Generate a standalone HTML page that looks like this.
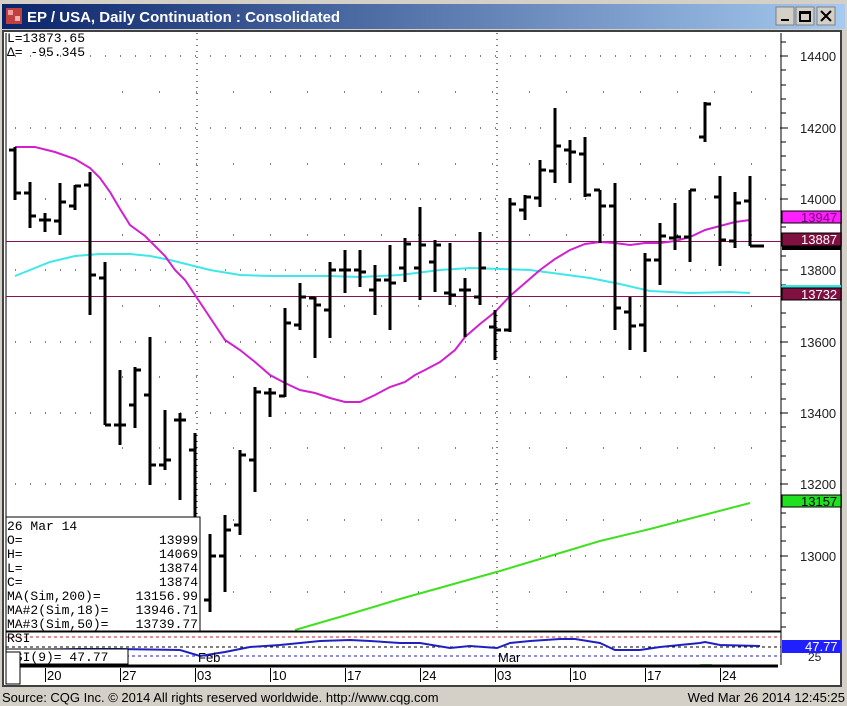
<!DOCTYPE html>
<html><head><meta charset="utf-8"><style>
html,body{margin:0;padding:0;width:847px;height:706px;overflow:hidden;background:#d4d0c8;font-family:"Liberation Sans",sans-serif}
svg{display:block}
</style></head><body>
<svg width="847" height="706" xmlns="http://www.w3.org/2000/svg" font-family="Liberation Sans, sans-serif">
<defs><linearGradient id="tb" x1="0" x2="1"><stop offset="0" stop-color="#0a246a"/><stop offset="1" stop-color="#a6caf0"/></linearGradient></defs>
<rect x="0" y="0" width="847" height="706" fill="#d4d0c8"/>
<rect x="2" y="4" width="843" height="25" fill="url(#tb)"/>
<rect x="6" y="8" width="16" height="16" fill="#c04040"/><rect x="8" y="10" width="5" height="5" fill="#f0a0a0"/><rect x="15" y="16" width="5" height="5" fill="#f0b0b0"/>
<text x="27" y="22" font-size="15" font-weight="bold" fill="#fff">EP / USA, Daily Continuation : Consolidated</text>
<g fill="#d4d0c8" stroke="#808080"><rect x="776" y="7" width="18" height="18"/><rect x="796" y="7" width="18" height="18"/><rect x="817" y="7" width="18" height="18"/></g>
<path d="M781 20h8M800 12h10v9h-10zM800 13h10M821 11l10 10M831 11l-10 10" stroke="#000" stroke-width="2" fill="none"/>
<rect x="3" y="31" width="838" height="655" fill="#fff"/>
<rect x="3" y="31" width="838" height="655" fill="none" stroke="#404040" stroke-width="2"/>
<g stroke="#000" stroke-width="1" stroke-dasharray="1,14">
<path d="M15 56H781M15 128H781M15 199H781M15 270H781M15 342H781M15 413H781M15 484H781M15 556H781"/>
</g>
<g stroke="#000" stroke-width="1" stroke-dasharray="1,5">
<path d="M197 33V630M497 33V630M781 33V665"/>
</g>
<g stroke="#000" stroke-dasharray="1,36"><path d="M122 92H781M122 164H781M122 235H781M122 306H781M122 377H781M122 448H781M122 520H781M122 592H781"/></g>
<path d="M6 33V665" stroke="#000" stroke-width="1"/>
<path d="M781 33V665" stroke="#000" stroke-width="1"/>
<g stroke="#000"><path d="M781 42h5M781 56h7M781 70h5M781 85h5M781 99h5M781 113h5M781 128h7M781 142h5M781 156h5M781 170h5M781 185h5M781 199h7M781 213h5M781 227h5M781 242h5M781 256h5M781 270h7M781 285h5M781 299h5M781 313h5M781 327h5M781 342h7M781 356h5M781 370h5M781 384h5M781 399h5M781 413h7M781 427h5M781 441h5M781 456h5M781 470h5M781 484h7M781 498h5M781 513h5M781 527h5M781 541h5M781 556h7M781 570h5M781 584h5M781 598h5M781 613h5M781 627h5"/></g>
<path d="M6 241.5H781M6 296.5H781" stroke="#8a1050" stroke-width="1"/>
<polyline fill="none" stroke="#3ee8e8" stroke-width="2" points="15,276 30,270 50,262 75,256 100,254 130,254 150,256 170,260 190,265 210,270 240,275 270,276 300,276 330,276 360,277 400,275 440,270 470,268 500,269 530,270 560,274 590,278 620,284 650,291 690,293 730,292 750,293"/>
<polyline fill="none" stroke="#d020d0" stroke-width="2" points="15,147 35,147 55,152 75,159 90,168 100,178 110,192 120,209 130,225 145,236 155,246 165,256 175,270 185,280 195,295 205,310 215,325 225,340 240,350 255,362 270,375 285,383 300,390 315,393 330,398 345,402 360,402 375,395 390,387 405,382 415,375 425,370 440,362 455,350 465,337 480,324 495,312 510,296 525,283 540,270 555,259 570,250 585,244 600,242 615,243 630,245 645,243 660,243 675,241 690,237 705,230 720,226 735,222 750,220"/>
<polyline fill="none" stroke="#40e020" stroke-width="2" points="295,630 350,614 400,599 450,585 500,571 550,556 600,541 650,529 700,516 750,503"/>
<g stroke="#000" stroke-width="3" fill="none">
<path d="M15 147V200M9 150h6M15 193h6"/>
<path d="M30 182V228M24 193h6M30 216h6"/>
<path d="M45 213V232M39 220h6M45 220h6"/>
<path d="M60 183V235M54 221h6M60 202h6"/>
<path d="M75 185V210M69 206h6M75 186h6"/>
<path d="M90 172V315M84 185h6M90 275h6"/>
<path d="M105 262V425M99 278h6M105 425h6"/>
<path d="M120 370V445M114 425h6M120 425h6"/>
<path d="M135 367V428M129 405h6M135 370h6"/>
<path d="M150 337V485M144 395h6M150 465h6"/>
<path d="M165 410V470M159 465h6M165 460h6"/>
<path d="M180 413V500M174 420h6M180 420h6"/>
<path d="M195 433V560M189 450h6"/>
<path d="M210 534V612M204 600h6M210 556h6"/>
<path d="M225 515V592M219 556h6M225 530h6"/>
<path d="M240 450V535M234 525h6M240 455h6"/>
<path d="M255 387V492M249 460h6M255 392h6"/>
<path d="M270 388V417M264 393h6M270 393h6"/>
<path d="M285 308V397M279 396h6M285 323h6"/>
<path d="M300 283V330M294 325h6M300 297h6"/>
<path d="M315 297V358M309 298h6M315 305h6"/>
<path d="M330 262V338M324 310h6M330 270h6"/>
<path d="M345 250V293M339 270h6M345 270h6"/>
<path d="M360 250V287M354 270h6M360 272h6"/>
<path d="M375 265V315M369 290h6M375 280h6"/>
<path d="M390 245V330M384 280h6M390 283h6"/>
<path d="M405 238V282M399 268h6M405 244h6"/>
<path d="M420 207V300M414 268h6M420 245h6"/>
<path d="M435 240V292M429 262h6M435 245h6"/>
<path d="M450 243V305M444 293h6M450 295h6"/>
<path d="M465 278V337M459 290h6M465 290h6"/>
<path d="M480 232V305M474 297h6M480 268h6"/>
<path d="M495 310V360M489 327h6M495 330h6"/>
<path d="M510 198V332M504 330h6M510 204h6"/>
<path d="M525 195V220M519 210h6M525 197h6"/>
<path d="M540 160V207M534 198h6M540 170h6"/>
<path d="M555 108V183M549 171h6M555 146h6"/>
<path d="M570 140V183M564 150h6M570 152h6"/>
<path d="M585 137V197M579 154h6M585 195h6"/>
<path d="M600 190V243M594 190h6M600 206h6"/>
<path d="M615 183V330M609 206h6M615 308h6"/>
<path d="M630 297V350M624 312h6M630 326h6"/>
<path d="M645 253V352M639 325h6M645 260h6"/>
<path d="M660 223V285M654 260h6M660 236h6"/>
<path d="M675 203V250M669 238h6M675 237h6"/>
<path d="M690 190V262M684 237h6M690 190h6"/>
<path d="M705 102V142M699 137h6M705 104h6"/>
<path d="M720 176V266M714 197h6M720 240h6"/>
<path d="M735 192V248M729 241h6M735 203h6"/>
<path d="M750 176V246M744 201h6M750 246h14"/>
</g>
<text font-family="Liberation Mono, monospace" font-size="13" fill="#000"><tspan x="7" y="42">L=13873.65</tspan><tspan x="7" y="56">Δ= -95.345</tspan></text>
<g font-size="13" fill="#202020"><text x="800" y="61">14400</text><text x="800" y="133">14200</text><text x="800" y="204">14000</text><text x="800" y="275">13800</text><text x="800" y="347">13600</text><text x="800" y="418">13400</text><text x="800" y="489">13200</text><text x="800" y="561">13000</text><text x="808" y="661" font-size="12">25</text></g>
<rect x="782" y="211" width="59" height="12" fill="#ff20ff" stroke="#000"/><text x="801" y="222" font-size="13" fill="#700070">13947</text>
<rect x="782" y="245" width="59" height="5" fill="#000"/>
<rect x="782" y="233" width="59" height="13" fill="#801040" stroke="#000"/><text x="801" y="244" font-size="13" fill="#fff">13887</text>
<rect x="782" y="285" width="59" height="3" fill="#40e0e0"/>
<rect x="782" y="288" width="59" height="12" fill="#801040" stroke="#000"/><text x="801" y="299" font-size="13" fill="#fff">13732</text>
<rect x="782" y="495" width="59" height="12" fill="#20e020" stroke="#000"/><text x="801" y="506" font-size="13" fill="#000">13157</text>
<rect x="6" y="517" width="194" height="114" fill="#fff" stroke="#000"/>
<g font-family="Liberation Mono, monospace" font-size="13" fill="#000">
<text x="7" y="530">26 Mar 14</text>
<text x="7" y="544">O=</text><text x="198" y="544" text-anchor="end">13999</text>
<text x="7" y="558">H=</text><text x="198" y="558" text-anchor="end">14069</text>
<text x="7" y="572">L=</text><text x="198" y="572" text-anchor="end">13874</text>
<text x="7" y="586">C=</text><text x="198" y="586" text-anchor="end">13874</text>
<text x="7" y="600">MA(Sim,200)=</text><text x="198" y="600" text-anchor="end">13156.99</text>
<text x="7" y="614">MA#2(Sim,18)=</text><text x="198" y="614" text-anchor="end">13946.71</text>
<text x="7" y="628">MA#3(Sim,50)=</text><text x="198" y="628" text-anchor="end">13739.77</text>
</g>
<path d="M6 631.5H781" stroke="#000" stroke-width="2"/>
<path d="M6 637H781" stroke="#c02020" stroke-dasharray="3,3"/>
<path d="M6 647H781" stroke="#000" stroke-dasharray="3,3"/>
<path d="M6 656H781" stroke="#2020c0" stroke-dasharray="3,3"/>
<polyline fill="none" stroke="#2020c0" stroke-width="2" points="15,650 80,649 120,649 180,650 200,656 225,652 250,647 280,645 300,643 320,641 350,640 370,641 400,643 420,643 450,648 470,646 497,648 510,643 530,641 560,639 575,639 600,643 615,650 640,650 660,647 700,643 705,642 720,645 760,646"/>
<text x="7" y="642" font-family="Liberation Mono, monospace" font-size="13">RSI</text>
<rect x="6" y="649" width="122" height="15" fill="#fff" stroke="#000"/>
<text x="7" y="661" font-family="Liberation Mono, monospace" font-size="13">RSI(9)=   47.77</text>
<text x="198" y="662" font-size="13">Feb</text><text x="498" y="662" font-size="13">Mar</text>
<rect x="782" y="640" width="59" height="13" fill="#2020ff"/><text x="805" y="651" font-size="13" fill="#fff">47.77</text>
<rect x="700" y="664" width="12" height="2" fill="#60d060"/>
<path d="M6 666H778" stroke="#000" stroke-width="3"/>
<rect x="6" y="652" width="14" height="32" fill="#fff" stroke="#000"/>
<g stroke="#000">
<path d="M45.5 668v14M120.5 668v14M195.5 668v14M270.5 668v14M345.5 668v14M420.5 668v14M495.5 668v14M570.5 668v14M645.5 668v14M720.5 668v14"/>
</g>
<g font-size="13" fill="#000"><text x="47" y="680">20</text><text x="122" y="680">27</text><text x="197" y="680">03</text><text x="272" y="680">10</text><text x="347" y="680">17</text><text x="422" y="680">24</text><text x="497" y="680">03</text><text x="572" y="680">10</text><text x="647" y="680">17</text><text x="722" y="680">24</text></g>
<rect x="0" y="688" width="847" height="18" fill="#d4d0c8"/>
<text x="2" y="702" font-size="13">Source: CQG Inc. © 2014 All rights reserved worldwide. http://www.cqg.com</text>
<text x="845" y="702" font-size="13" text-anchor="end">Wed Mar 26 2014 12:45:25</text>
</svg>
</body></html>
